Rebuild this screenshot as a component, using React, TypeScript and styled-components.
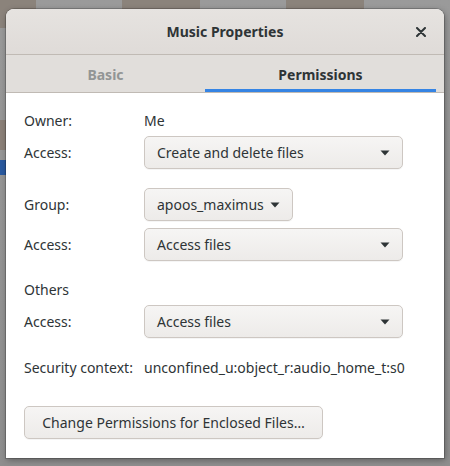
import React from "react";
import styled, { createGlobalStyle } from "styled-components";

const Global = createGlobalStyle`
  html, body { margin: 0; padding: 0; }
  body {
    width: 450px; height: 466px; overflow: hidden;
    background: #8c8b8a;
    font-family: "Noto Sans", "Open Sans", sans-serif;
    color: #2e3436;
  }
`;

const Desktop = styled.div`
  position: relative;
  width: 450px;
  height: 466px;
  background: linear-gradient(180deg, #9a9a9a 0%, #8e8e8e 100%);
  overflow: hidden;
`;

const Blob = styled.div<{ $x: number; $y: number; $w: number; $h: number; $c: string }>`
  position: absolute;
  left: ${(p) => p.$x}px;
  top: ${(p) => p.$y}px;
  width: ${(p) => p.$w}px;
  height: ${(p) => p.$h}px;
  background: ${(p) => p.$c};
`;

const Dialog = styled.div`
  position: absolute;
  left: 6px;
  top: 9px;
  width: 438px;
  height: 449px;
  background: #ffffff;
  border-radius: 8px 8px 0 0;
  box-shadow: 0 0 0 1px rgba(0, 0, 0, 0.18), 1px 2px 6px rgba(0, 0, 0, 0.35);
  display: flex;
  flex-direction: column;
  overflow: hidden;
`;

const HeaderBar = styled.div`
  height: 45px;
  flex: none;
  display: flex;
  align-items: center;
  justify-content: center;
  position: relative;
  background: linear-gradient(180deg, #e6e3e0 0%, #dfdbd8 100%);
  border-bottom: 1px solid #c0bab4;
`;

const Title = styled.div`
  font-weight: 700;
  font-size: 14px;
  color: #2e3436;
`;

const Close = styled.div`
  position: absolute;
  right: 18px;
  top: 18px;
  width: 10px;
  height: 10px;
  display: flex;
`;

const Tabs = styled.div`
  height: 37px;
  flex: none;
  display: flex;
  padding-right: 8px;
  background: #e1dedb;
  border-bottom: 1px solid #c0bab4;
`;

const Tab = styled.div<{ $w: number; $active?: boolean }>`
  width: ${(p) => p.$w}px;
  display: flex;
  align-items: center;
  justify-content: center;
  font-weight: 700;
  font-size: 14px;
  padding-top: 1px;
  color: ${(p) => (p.$active ? "#2e3436" : "#929595")};
  box-shadow: ${(p) => (p.$active ? "inset 0 -3px 0 #3584e4" : "none")};
`;

const Content = styled.div`
  flex: 1;
  display: flex;
  flex-direction: column;
  padding: 17px 40px 19px 18px;
  font-size: 14px;
`;

const Row = styled.div<{ $mt: number; $h: number }>`
  display: grid;
  grid-template-columns: 120px auto;
  justify-content: start;
  align-items: center;
  margin-top: ${(p) => p.$mt}px;
  height: ${(p) => p.$h}px;
`;

const Label = styled.div`
  color: #2e3436;
  white-space: nowrap;
`;

const Value = styled.div`
  color: #2e3436;
  white-space: nowrap;
`;

const Combo = styled.div<{ $w?: number }>`
  box-sizing: border-box;
  height: 33px;
  width: ${(p) => (p.$w ? `${p.$w}px` : "auto")};
  display: flex;
  align-items: center;
  justify-content: space-between;
  gap: 6px;
  padding: 0 12px 0 12px;
  border: 1px solid #cdc7c2;
  border-radius: 5px;
  background: linear-gradient(180deg, #f6f5f4 0%, #edebe9 100%);
  box-shadow: 0 1px 0 rgba(0, 0, 0, 0.04);
  color: #2e3436;
  white-space: nowrap;
`;

const Button = styled.div`
  box-sizing: border-box;
  height: 33px;
  margin-top: 29px;
  align-self: flex-start;
  display: flex;
  align-items: center;
  justify-content: center;
  padding: 0 16px;
  border: 1px solid #cdc7c2;
  border-radius: 5px;
  background: linear-gradient(180deg, #f6f5f4 0%, #edebe9 100%);
  box-shadow: 0 1px 0 rgba(0, 0, 0, 0.04);
  color: #2e3436;
  white-space: nowrap;
  width: 299px;
`;

const Arrow = () => (
  <svg width="10" height="6" viewBox="0 0 10 6">
    <path d="M0.5 0.5 L9.5 0.5 L5 5.5 Z" fill="#2e3436" />
  </svg>
);

const Times = () => (
  <svg width="10" height="10" viewBox="0 0 10 10">
    <path d="M1 1 L9 9 M9 1 L1 9" stroke="#2e3436" strokeWidth="2" strokeLinecap="round" />
  </svg>
);

export default function App() {
  return (
    <>
      <Global />
      <Desktop>
        <Blob $x={0} $y={0} $w={36} $h={28} $c="#8b837b" />
        <Blob $x={122} $y={0} $w={78} $h={10} $c="#8b837b" />
        <Blob $x={286} $y={0} $w={78} $h={10} $c="#8b837b" />
        <Blob $x={0} $y={120} $w={6} $h={30} $c="#8b8078" />
        <Blob $x={0} $y={160} $w={6} $h={15} $c="#2a5aa0" />
        <Dialog>
          <HeaderBar>
            <Title>Music Properties</Title>
            <Close>
              <Times />
            </Close>
          </HeaderBar>
          <Tabs>
            <Tab $w={199}>Basic</Tab>
            <Tab $w={231} $active>
              Permissions
            </Tab>
          </Tabs>
          <Content>
            <Row $mt={0} $h={20}>
              <Label>Owner:</Label>
              <Value>Me</Value>
            </Row>
            <Row $mt={6} $h={33}>
              <Label>Access:</Label>
              <Combo $w={259}>
                <span>Create and delete files</span>
                <Arrow />
              </Combo>
            </Row>
            <Row $mt={19} $h={33}>
              <Label>Group:</Label>
              <Combo>
                <span>apoos_maximus</span>
                <Arrow />
              </Combo>
            </Row>
            <Row $mt={7} $h={33}>
              <Label>Access:</Label>
              <Combo $w={259}>
                <span>Access files</span>
                <Arrow />
              </Combo>
            </Row>
            <Row $mt={18} $h={20}>
              <Label>Others</Label>
            </Row>
            <Row $mt={6} $h={33}>
              <Label>Access:</Label>
              <Combo $w={259}>
                <span>Access files</span>
                <Arrow />
              </Combo>
            </Row>
            <Row $mt={19} $h={20}>
              <Label>Security context:</Label>
              <Value>unconfined_u:object_r:audio_home_t:s0</Value>
            </Row>
            <Button>Change Permissions for Enclosed Files…</Button>
          </Content>
        </Dialog>
      </Desktop>
    </>
  );
}
